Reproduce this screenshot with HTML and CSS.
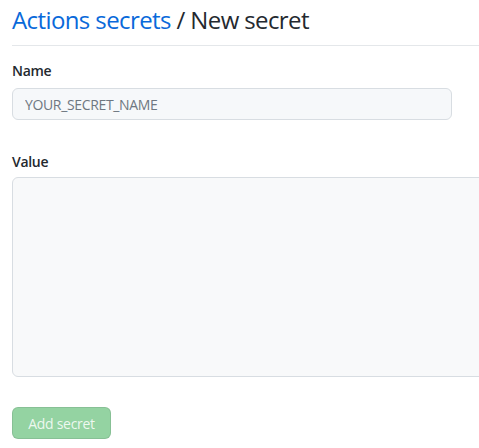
FILE: index.html
```html
<!DOCTYPE html>
<html>
<head>
<meta charset="utf-8">
<link rel="stylesheet" href="styles.css">
</head>
<body>
<div class="page">
  <div class="subhead">
    <h2 class="subhead-heading"><a class="crumb" href="#">Actions secrets</a> / New secret</h2>
  </div>
  <form class="form">
    <div class="form-group">
      <label class="form-label" for="name">Name</label>
      <input class="form-control name-input" id="name" type="text" placeholder="YOUR_SECRET_NAME">
    </div>
    <div class="form-group value-group">
      <label class="form-label value-label" for="value">Value</label>
      <textarea class="form-control value-input" id="value"></textarea>
    </div>
    <button class="btn-primary" type="button" disabled>Add secret</button>
  </form>
</div>
</body>
</html>
```
FILE: styles.css
```css
html, body {
  margin: 0;
  padding: 0;
  background: #ffffff;
  overflow: hidden;
}
body {
  font-family: "Open Sans", "Noto Sans", sans-serif;
  color: #24292f;
  font-size: 14px;
  letter-spacing: -0.3px;
}
.page {
  padding: 0 0 0 12px;
}
.subhead {
  border-bottom: 1px solid #e4e7ea;
  padding: 2px 0 7px 0;
}
.subhead-heading {
  margin: 0;
  font-size: 24px;
  font-weight: 400;
  line-height: 36px;
  color: #24292f;
  letter-spacing: -0.6px;
}
.crumb {
  color: #0969da;
  text-decoration: none;
}
.form {
  display: flex;
  flex-direction: column;
  align-items: flex-start;
}
.form-group {
  display: flex;
  flex-direction: column;
  margin-top: 14px;
}
.value-group {
  margin-top: 31px;
}
.form-label {
  font-weight: 600;
  font-size: 14px;
  line-height: 21px;
  margin-bottom: 7px;
}
.value-label {
  margin-bottom: 5px;
}
.form-control {
  box-sizing: border-box;
  background: #f6f8fa;
  border: 1px solid #d8dde2;
  border-radius: 6px;
  font-family: inherit;
  font-size: 14px;
  letter-spacing: -0.35px;
  color: #24292f;
  outline: none;
}
.name-input {
  width: 440px;
  height: 32px;
  padding: 4px 12px;
}
.name-input::placeholder {
  color: #6e7781;
}
.value-input {
  width: 480px;
  height: 200px;
  resize: none;
  padding: 8px 12px;
  background: #f8f9fa;
}
.btn-primary {
  margin-top: 30px;
  width: 99px;
  height: 32px;
  box-sizing: border-box;
  background: #94d3a2;
  border: 1px solid rgba(27, 31, 36, 0.1);
  border-radius: 6px;
  color: rgba(255, 255, 255, 0.85);
  font-family: inherit;
  font-size: 14px;
  font-weight: 400;
  letter-spacing: -0.3px;
  white-space: nowrap;
  padding: 0 8px;
}
```
